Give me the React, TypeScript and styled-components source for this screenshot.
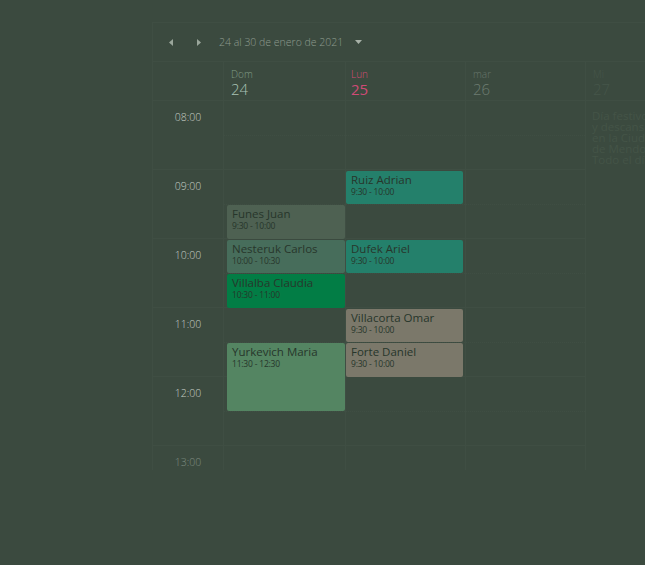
import React from "react";
import styled, { createGlobalStyle } from "styled-components";

const GlobalStyle = createGlobalStyle`
  html, body { margin: 0; padding: 0; }
  body {
    background: #3b4a3f;
    font-family: "Open Sans", "Noto Sans", sans-serif;
    width: 645px;
    height: 565px;
    overflow: hidden;
  }
`;

const LINE = "rgba(255,255,255,0.022)";
const HOUR = 69;

const Calendar = styled.div`
  margin: 22px 0 0 152px;
  width: 493px;
  border-top: 1px solid ${LINE};
  border-left: 1px solid ${LINE};
  overflow: hidden;
`;

const Toolbar = styled.div`
  height: 38px;
  display: flex;
  align-items: center;
  padding-left: 13px;
  border-bottom: 1px solid ${LINE};
`;

const NavButton = styled.button<{ $gap: number }>`
  background: none;
  border: none;
  padding: 0;
  width: 10px;
  height: 10px;
  display: flex;
  align-items: center;
  justify-content: center;
  margin-right: ${(p) => p.$gap}px;
  cursor: pointer;
`;

const RangeLabel = styled.span`
  font-size: 10.5px;
  font-weight: 300;
  color: #8d9a8e;
  white-space: nowrap;
`;

const Caret = styled.span`
  margin-left: 12px;
  display: flex;
  align-items: center;
`;

const columns = "70px 122px 120px 120px 1fr";

const HeaderRow = styled.div`
  display: grid;
  grid-template-columns: ${columns};
  height: 38px;
  border-bottom: 1px solid ${LINE};
`;

const HeaderCell = styled.div<{ $pad?: number }>`
  border-left: 1px solid ${LINE};
  padding: 6px 0 0 ${(p) => p.$pad ?? 7}px;
  &:first-child { border-left: none; }
`;

const DayName = styled.div<{ $c: string }>`
  font-size: 10px;
  line-height: 12px;
  color: ${(p) => p.$c};
  font-weight: 300;
`;

const DayNum = styled.div<{ $c: string; $w?: number }>`
  font-size: 15px;
  line-height: 19px;
  color: ${(p) => p.$c};
  font-weight: ${(p) => p.$w ?? 300};
`;

const Body = styled.div`
  display: grid;
  grid-template-columns: ${columns};
  height: 369px;
  overflow: hidden;
`;

const TimeCol = styled.div`
  display: flex;
  flex-direction: column;
`;

const TimeSlot = styled.div<{ $dim?: boolean }>`
  height: ${HOUR}px;
  flex-shrink: 0;
  box-sizing: border-box;
  border-bottom: 1px solid ${LINE};
  text-align: center;
  padding-top: 10px;
  font-size: 10.5px;
  font-weight: 300;
  line-height: 12px;
  color: ${(p) => (p.$dim ? "#7d8a7f" : "#c4ccc3")};
`;

const DayCol = styled.div`
  position: relative;
  border-left: 1px solid ${LINE};
  display: flex;
  flex-direction: column;
  overflow: hidden;
`;

const HalfSlot = styled.div<{ $hour?: boolean }>`
  height: 34.5px;
  flex-shrink: 0;
  box-sizing: border-box;
  border-bottom: 1px ${(p) => (p.$hour ? "solid" : "dotted")} ${LINE};
`;

const Event = styled.div<{ $bg: string }>`
  position: absolute;
  box-sizing: border-box;
  background: ${(p) => p.$bg};
  border-radius: 2px;
  padding: 1px 5px;
  color: #27362b;
  overflow: hidden;
`;

const EventName = styled.div`
  font-size: 11.5px;
  line-height: 15px;
  white-space: nowrap;
`;

const EventTime = styled.div`
  font-size: 8.5px;
  line-height: 10px;
  letter-spacing: -0.2px;
`;

const Note = styled.div`
  padding: 9px 0 0 6px;
  font-size: 11.5px;
  line-height: 11px;
  color: #445447;
  white-space: nowrap;
`;

type Ev = { name: string; time: string; start: number; end: number; bg: string };

const domEvents: Ev[] = [
  { name: "Funes Juan", time: "9:30 - 10:00", start: 9.5, end: 10, bg: "#4e6152" },
  { name: "Nesteruk Carlos", time: "10:00 - 10:30", start: 10, end: 10.5, bg: "#476d5b" },
  { name: "Villalba Claudia", time: "10:30 - 11:00", start: 10.5, end: 11, bg: "#027d45" },
  { name: "Yurkevich Maria", time: "11:30 - 12:30", start: 11.5, end: 12.5, bg: "#548562" },
];

const lunEvents: Ev[] = [
  { name: "Ruiz Adrian", time: "9:30 - 10:00", start: 9, end: 9.5, bg: "#24806b" },
  { name: "Dufek Ariel", time: "9:30 - 10:00", start: 10, end: 10.5, bg: "#24806b" },
  { name: "Villacorta Omar", time: "9:30 - 10:00", start: 11, end: 11.5, bg: "#7b786a" },
  { name: "Forte Daniel", time: "9:30 - 10:00", start: 11.5, end: 12, bg: "#7b786a" },
];

const hours = ["08:00", "09:00", "10:00", "11:00", "12:00", "13:00"];

const Slots = () => (
  <>
    {Array.from({ length: 12 }).map((_, i) => (
      <HalfSlot key={i} $hour={i % 2 === 1} />
    ))}
  </>
);

const Events = ({ list, left, right }: { list: Ev[]; left: number; right: number }) => (
  <>
    {list.map((e) => (
      <Event
        key={e.name}
        $bg={e.bg}
        style={{
          top: (e.start - 8) * HOUR + 0.5,
          height: (e.end - e.start) * HOUR - 1,
          left,
          right,
        }}
      >
        <EventName>{e.name}</EventName>
        <EventTime>{e.time}</EventTime>
      </Event>
    ))}
  </>
);

const Tri = ({ dir }: { dir: "l" | "r" | "d" }) => {
  if (dir === "d")
    return (
      <svg width="7" height="4" viewBox="0 0 7 4">
        <path d="M0 0 L7 0 L3.5 4 Z" fill="#a7b1a7" />
      </svg>
    );
  return (
    <svg width="4" height="7" viewBox="0 0 4 7">
      <path d={dir === "l" ? "M4 0 L4 7 L0 3.5 Z" : "M0 0 L0 7 L4 3.5 Z"} fill="#9aa69b" />
    </svg>
  );
};

export default function App() {
  return (
    <>
      <GlobalStyle />
      <Calendar>
        <Toolbar>
          <NavButton $gap={18} aria-label="anterior">
            <Tri dir="l" />
          </NavButton>
          <NavButton $gap={15} aria-label="siguiente">
            <Tri dir="r" />
          </NavButton>
          <RangeLabel>24 al 30 de enero de 2021</RangeLabel>
          <Caret>
            <Tri dir="d" />
          </Caret>
        </Toolbar>
        <HeaderRow>
          <HeaderCell />
          <HeaderCell>
            <DayName $c="#7f9b85">Dom</DayName>
            <DayNum $c="#a9c3b5">24</DayNum>
          </HeaderCell>
          <HeaderCell $pad={5}>
            <DayName $c="#d04a76">Lun</DayName>
            <DayNum $c="#d04a76" $w={400}>25</DayNum>
          </HeaderCell>
          <HeaderCell>
            <DayName $c="#66756a">mar</DayName>
            <DayNum $c="#6d7c71">26</DayNum>
          </HeaderCell>
          <HeaderCell>
            <DayName $c="#46564a">Mi</DayName>
            <DayNum $c="#46564a">27</DayNum>
          </HeaderCell>
        </HeaderRow>
        <Body>
          <TimeCol>
            {hours.map((h) => (
              <TimeSlot key={h} $dim={h === "13:00"}>
                {h}
              </TimeSlot>
            ))}
          </TimeCol>
          <DayCol>
            <Slots />
            <Events list={domEvents} left={3} right={0} />
          </DayCol>
          <DayCol>
            <Slots />
            <Events list={lunEvents} left={0} right={2} />
          </DayCol>
          <DayCol>
            <Slots />
          </DayCol>
          <DayCol>
            <Note>
              Día festivo
              <br />y descanso
              <br />en la Ciudad
              <br />de Mendoza
              <br />Todo el día
            </Note>
          </DayCol>
        </Body>
      </Calendar>
    </>
  );
}
